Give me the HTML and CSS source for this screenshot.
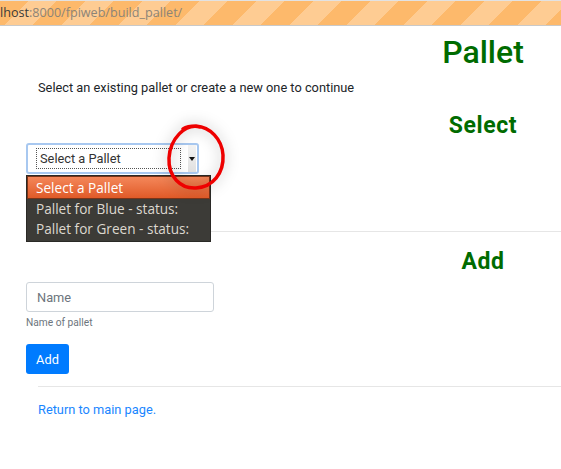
FILE: index.html
```html
<!DOCTYPE html>
<html lang="en">
<head>
<meta charset="utf-8">
<title>Build Pallet</title>
<link rel="stylesheet" href="styles.css">
</head>
<body>
<div class="urlbar"><span class="host">lhost</span><span class="path">:8000/fpiweb/build_pallet/</span></div>
<main class="page">
  <h1 class="title">Pallet</h1>
  <p class="intro">Select an existing pallet or create a new one to continue</p>
  <h2 class="section">Select</h2>
  <div class="select-wrap">
    <div class="select">
      <div class="select-value"><span class="focus-ring">Select a Pallet</span></div>
      <div class="select-btn"><span class="caret"></span></div>
    </div>
    <ul class="dropdown">
      <li class="opt active">Select a Pallet</li>
      <li class="opt">Pallet for Blue - status:</li>
      <li class="opt">Pallet for Green - status:</li>
    </ul>
    <svg class="scribble" width="80" height="90" viewBox="155 115 80 90">
      <path d="M200 127 C185 123 170 139 169 158 C168 177 181 189 196 188 C213 187 224 173 223 155 C222 139 210 127 196 126 C190 126 186 127 183 129" fill="none" stroke="#ee0000" stroke-width="3.5" stroke-linecap="round"/>
    </svg>
  </div>
  <hr class="rule first">
  <h2 class="section add-title">Add</h2>
  <input class="name-input" type="text" placeholder="Name">
  <small class="help">Name of pallet</small>
  <button class="btn">Add</button>
  <hr class="rule second">
  <a class="back" href="#">Return to main page.</a>
</main>
</body>
</html>
```
FILE: styles.css
```css
html, body {
  margin: 0;
  padding: 0;
  background: #fff;
}
body {
  font-family: Roboto, "Liberation Sans", sans-serif;
  color: #212529;
  font-size: 12.8px;
}
.urlbar {
  border-top: 1px solid #e2e2e2;
  border-bottom: 1px solid #c9c9c9;
  box-sizing: border-box;
  height: 26px;
  background: repeating-linear-gradient(135deg, #fdb96b 0 20px, #fecc93 20px 40.3px);
  font-family: "Open Sans", sans-serif;
  font-size: 12.6px;
  line-height: 23px;
  white-space: nowrap;
  overflow: hidden;
}
.host { color: #3a3a3a; }
.path { color: #8c8478; }
.page {
  display: flex;
  flex-direction: column;
  align-items: flex-start;
  padding-left: 26px;
}
.title, .section {
  align-self: stretch;
  margin: 0;
  padding-left: 379px;
  text-align: center;
  color: #006b00;
  font-weight: 500;
}
.title {
  font-size: 32px;
  line-height: 38px;
  margin-top: 7px;
}
.intro {
  margin: 7px 0 0 12px;
  line-height: 19px;
}
.section {
  font-size: 23px;
  line-height: 27px;
  margin-top: 15px;
  font-weight: 700;
  letter-spacing: 0.6px;
}
.select-wrap {
  position: relative;
  margin-top: 4px;
}
.select {
  box-sizing: border-box;
  width: 173px;
  height: 31px;
  border: 2px solid #a8c8f0;
  border-radius: 3px;
  background: #fff;
  display: flex;
  align-items: center;
  padding: 0 0 0 8px;
}
.select-value {
  flex: 1;
  display: flex;
}
.focus-ring {
  box-sizing: border-box;
  width: 145px;
  height: 21px;
  border: 1px dotted #555;
  padding-left: 3px;
  line-height: 19px;
  font-size: 12.8px;
  color: #333;
}
.select-btn {
  width: 8px;
  height: 27px;
  margin-right: 1px;
  background: linear-gradient(#f3f3f3, #e0e0e0);
  display: flex;
  align-items: center;
  justify-content: center;
}
.caret {
  width: 0;
  height: 0;
  border-left: 3px solid transparent;
  border-right: 3px solid transparent;
  border-top: 4px solid #111;
}
.dropdown {
  position: absolute;
  left: 0;
  top: 32px;
  width: 185px;
  box-sizing: border-box;
  margin: 0;
  padding: 0 1px 2px;
  list-style: none;
  background: #3c3b37;
  border: 1px solid #2a2926;
  font-family: "Open Sans", sans-serif;
  font-size: 13.6px;
  color: #dcd8cf;
  z-index: 2;
}
.opt {
  height: 20px;
  line-height: 20px;
  padding-left: 8px;
  white-space: nowrap;
}
.opt.active {
  height: 21px;
  line-height: 21px;
  background: linear-gradient(#f4875a, #e05a28);
  color: #fff;
  border: 1px solid #7a3418;
  margin: 0 -1px;
}
.scribble {
  position: absolute;
  left: 129px;
  top: -28px;
  overflow: visible;
  filter: drop-shadow(0 0 7px rgba(0,0,0,0.3));
  z-index: 3;
}
.rule {
  align-self: stretch;
  margin: 0 0 0 12px;
  border: 0;
  border-top: 1px solid #e6e6e6;
  height: 0;
}
.rule.first { margin-top: 57px; }
.add-title { margin-top: 16px; }
.name-input {
  box-sizing: border-box;
  width: 188px;
  height: 30px;
  margin-top: 7px;
  padding: 0 10px;
  border: 1px solid #ced4da;
  border-radius: 3px;
  font-family: Roboto, sans-serif;
  font-size: 12.8px;
  color: #495057;
}
.name-input::placeholder { color: #6c757d; }
.help {
  margin-top: 3px;
  font-size: 10.2px;
  line-height: 15px;
  color: #6c757d;
}
.btn {
  margin-top: 14px;
  box-sizing: border-box;
  width: 43px;
  height: 30px;
  border: 0;
  border-radius: 3px;
  background: #007bff;
  color: #fff;
  font-family: Roboto, sans-serif;
  font-size: 12.8px;
  padding: 0;
}
.rule.second { margin-top: 12px; }
.back {
  margin: 13px 0 0 12px;
  line-height: 19px;
  color: #1a86ff;
  text-decoration: none;
}
```
